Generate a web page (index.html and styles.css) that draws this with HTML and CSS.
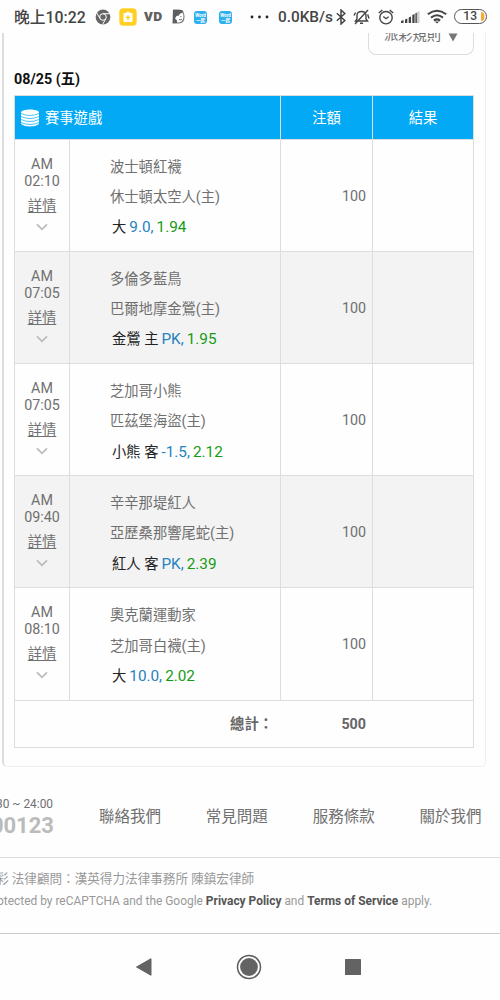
FILE: index.html
```
<!DOCTYPE html>
<html lang="zh-Hant">
<head>
<meta charset="utf-8">
<title>賽事遊戲</title>
<link rel="stylesheet" href="styles.css">
</head>
<body>
<header class="status">
  <div class="clock">晚上10:22</div>
  <svg class="i-chrome" viewBox="0 0 16 16"><circle cx="8" cy="8" r="7.4" fill="#666"/><g stroke="#fff" stroke-width="1" fill="none"><circle cx="8" cy="8" r="3.3"/><path d="M8 4.7h7M5.2 9.7 1.6 3.8M10.9 9.7 7.5 15.5"/></g></svg>
  <svg class="i-yellow" viewBox="0 0 18 18"><rect x=".3" y=".3" width="17.4" height="17.4" rx="4" fill="#ffcf23"/><path d="M5.500 5h2V3.700h3V5h2q1 0 1 1v7q0 1-1 1h-7q-1 0-1-1V6q0-1 1-1z" fill="#fff"/><path d="M9 7.200v4.600M6.700 9.500h4.600" stroke="#ffcf23" stroke-width="1.4"/></svg>
  <div class="vd">VD</div>
  <svg class="i-face" viewBox="0 0 13 15"><path d="M1.500 1h5.200c3.700 0 5.300 2.700 5.300 6.500s-2 6.500-5.300 6.500H1z" fill="#fff" stroke="#777" stroke-width="1.1"/><path d="M1 1h9.500v3L8 4.500 7 6.500 4.500 7 3 9.500 5 11.500 5 14H1z" fill="#5e5e5e"/><path d="M8.300 7.500h1M7 10.500q2 1 3-.5" fill="none" stroke="#666"/></svg>
  <div class="word">Word<br>一起</div>
  <div class="word second">Word<br>一起</div>
  <svg class="i-dots" viewBox="0 0 20 4" fill="#222"><circle cx="2" cy="2" r="1.400"/><circle cx="9.500" cy="2" r="1.400"/><circle cx="17" cy="2" r="1.400"/></svg>
  <div class="speed">0.0KB/s</div>
  <svg class="i-bt" viewBox="0 0 10 16"><path d="m.8 4.300 8 7.200L5 15V1l3.800 3.500-8 7.200" fill="none" stroke="#444" stroke-width="1.500"/></svg>
  <svg class="i-bell" viewBox="0 0 17 16" fill="none" stroke="#444" stroke-width="1.400"><path d="M2.500 12h12L13 10V6.500C13 4 11.500 2.500 8.500 2.500S4 4 4 6.500V10zM7 14.300h3M15 1 2 15M1 6.500 2.600 3.500M16 9.500 14.700 5.500"/></svg>
  <svg class="i-alarm" viewBox="0 0 16 16" fill="none" stroke="#444" stroke-width="1.400"><circle cx="8" cy="8.700" r="6.200"/><path d="M.8 4 4.300 1M15.200 4l-3.500-3M5.300 7.500 8 9.700l2.700-2"/></svg>
  <svg class="i-signal" viewBox="0 0 19 14"><g fill="#444"><path d="M0 13v-2l2.500-1v3zM4 9.500l2.300-1V13H4zM7.700 7.500l2.300-1V13H7.700zM11.300 5l2.300-1v9h-2.300z"/></g><path d="M14.500 3 18.500 1v12h-4z" fill="#ccc"/><path d="M14.400 3h1.500v10h-1.500z" fill="#555"/></svg>
  <svg class="i-wifi" viewBox="0 0 20 15" fill="none" stroke="#444" stroke-width="2"><path d="M.8 5.200q9.200-7 18.400 0M4 8.600q6-4.600 12 0M6.900 11.600q3.100-2.400 6.200 0"/><path d="m7.800 12.400 2.200 2.200 2.200-2.200z" fill="#444" stroke="none"/></svg>
  <div class="battery"><span>13</span><svg viewBox="0 0 4 9"><path d="M0 0q3.500 0 3.500 4.500T0 9z" fill="#f8ab32"/></svg></div>
</header>

<main class="page">
  <section class="card">
    <div class="rules"><span>派彩規則</span><svg viewBox="0 0 10 9"><path d="M.5.500h9L5 8.500z" fill="#777"/></svg></div>
    <h1 class="date">08/25 (五)</h1>
    <div class="table">
      <div class="row head">
        <div class="title"><svg class="coins" viewBox="0 0 18 18"><path d="M0 3.500C0-.6 18-.6 18 3.500V14c0 4.500-18 4.500-18 0z" fill="#fff"/><path d="M0 4.500q9 4 18 0M0 7.500q9 4 18 0M0 10.500q9 4 18 0M0 13.500q9 4 18 0" fill="none" stroke="#03a9f4" stroke-width=".7"/></svg>賽事遊戲</div>
        <div>注額</div>
        <div>結果</div>
      </div>
      <div class="row">
        <div class="time"><span>AM</span><span>02:10</span><a>詳情</a><svg viewBox="0 0 12 8"><path d="m1 1.300 5 5 5-5"/></svg></div>
        <div class="match"><p>波士頓紅襪</p><p>休士頓太空人(主)</p><p class="pick">大<b>9.0,</b><i>1.94</i></p></div>
        <div class="stake">100</div><div></div>
      </div>
      <div class="row alt">
        <div class="time"><span>AM</span><span>07:05</span><a>詳情</a><svg viewBox="0 0 12 8"><path d="m1 1.300 5 5 5-5"/></svg></div>
        <div class="match"><p>多倫多藍鳥</p><p>巴爾地摩金鶯(主)</p><p class="pick">金鶯 主<b>PK,</b><i>1.95</i></p></div>
        <div class="stake">100</div><div></div>
      </div>
      <div class="row">
        <div class="time"><span>AM</span><span>07:05</span><a>詳情</a><svg viewBox="0 0 12 8"><path d="m1 1.300 5 5 5-5"/></svg></div>
        <div class="match"><p>芝加哥小熊</p><p>匹茲堡海盜(主)</p><p class="pick">小熊 客<b>-1.5,</b><i>2.12</i></p></div>
        <div class="stake">100</div><div></div>
      </div>
      <div class="row alt">
        <div class="time"><span>AM</span><span>09:40</span><a>詳情</a><svg viewBox="0 0 12 8"><path d="m1 1.300 5 5 5-5"/></svg></div>
        <div class="match"><p>辛辛那堤紅人</p><p>亞歷桑那響尾蛇(主)</p><p class="pick">紅人 客<b>PK,</b><i>2.39</i></p></div>
        <div class="stake">100</div><div></div>
      </div>
      <div class="row">
        <div class="time"><span>AM</span><span>08:10</span><a>詳情</a><svg viewBox="0 0 12 8"><path d="m1 1.300 5 5 5-5"/></svg></div>
        <div class="match"><p>奧克蘭運動家</p><p>芝加哥白襪(主)</p><p class="pick">大<b>10.0,</b><i>2.02</i></p></div>
        <div class="stake">100</div><div></div>
      </div>
      <div class="row total"><div class="label">總計：</div><div class="sum">500</div></div>
    </div>
  </section>

  <section class="links">
    <div class="phone"><span class="hours">30 ~ 24:00</span><span class="number">00123</span></div>
    <nav class="menu"><a>聯絡我們</a><a>常見問題</a><a>服務條款</a><a>關於我們</a></nav>
  </section>
  <footer class="legal">
    <p class="law">彩 法律顧問：漢英得力法律事務所 陳鎮宏律師</p>
    <p class="captcha">otected by reCAPTCHA and the Google <b>Privacy Policy</b> and <b>Terms of Service</b> apply.</p>
  </footer>
</main>

<nav class="keys">
  <svg class="k-back" viewBox="0 0 16 18"><path d="M.5 9 15 .7v16.600z" fill="#636363" stroke="#636363" stroke-linejoin="round"/></svg>
  <svg class="k-home" viewBox="0 0 26 26"><circle cx="13" cy="13" r="11.500" fill="none" stroke="#5c5c5c" stroke-width="1.500"/><circle cx="13" cy="13" r="8.900" fill="#636363"/></svg>
  <svg class="k-recent" viewBox="0 0 16 16"><rect width="16" height="16" rx=".6" fill="#636363"/></svg>
</nav>
</body>
</html>
```
FILE: styles.css
```
* { box-sizing: border-box; }
body { margin: 0; width: 500px; height: 1000px; overflow: hidden; background: #fefefe; color: #707070; font: 14.3px/17px Roboto, "Noto Sans CJK TC", sans-serif; }
p, h1 { margin: 0; }
svg { display: block; flex: none; }

.status { display: flex; align-items: center; height: 33px; padding-left: 14px; color: #444; white-space: nowrap; }
.status > * { flex: none; }
.clock { width: 73px; padding-top: 1px; font-size: 15.800px; font-weight: 500; }
.i-chrome { width: 16px; height: 16px; margin-left: 8px; }
.i-yellow { width: 18px; height: 18px; margin-left: 8px; }
.vd { width: 20px; margin-left: 7px; font-family: "Open Sans", sans-serif; font-weight: 800; font-size: 12.800px; color: #606060; }
.i-face { width: 13px; height: 15px; margin-left: 8px; }
.word { width: 13px; height: 13px; margin: 2px 0 0 9px; border-radius: 3px; background: #2fb0ee; color: #fff; font: bold 4.5px/5px Roboto, "Noto Sans CJK TC", sans-serif; padding-top: 2px; text-align: center; }
.word.second { margin-left: 12px; }
.i-dots { width: 20px; height: 4px; margin-left: 18px; }
.speed { width: 57px; margin-left: 8px; padding-top: 1px; font-size: 15.300px; font-weight: 500; }
.i-bt { width: 10px; height: 16px; margin-left: 1px; }
.i-bell { width: 17px; height: 16px; margin-left: 7px; }
.i-alarm { width: 16px; height: 16px; margin-left: 8px; }
.i-signal { width: 19px; height: 14px; margin-left: 7px; }
.i-wifi { width: 20px; height: 15px; margin-left: 7px; }
.battery { display: flex; align-items: center; justify-content: flex-end; gap: 4px; width: 33px; height: 15px; margin-left: 7px; padding-right: 1px; border: 1.5px solid #555; border-radius: 8px; font-size: 12px; font-weight: 500; }
.battery svg { width: 4px; height: 9px; }

.page { height: 900px; overflow: hidden; }
.card { width: 484px; height: 734px; margin-left: 2px; padding: 0 12px 0 10px; border: 1px solid #eee; border-top: 0; border-left: 2px solid #ddd; border-radius: 0 0 5px 5px; }
.rules { display: flex; justify-content: center; gap: 7px; width: 106px; height: 22px; margin-left: auto; margin-right: -1px; border: 1px solid #ddd; border-top: 0; border-radius: 0 0 8px 8px; overflow: hidden; }
.rules span { margin-top: -6px; height: 17px; }
.rules svg { width: 10px; height: 9px; }
.date { margin-top: 15px; color: #111; font-size: 14.300px; line-height: 18px; font-weight: 700; }
.table { width: 460px; margin-top: 7px; border: 1px solid #ddd; }
.row { display: grid; grid-template-columns: 54px 211px 92px 1fr; height: 112.200px; border-bottom: 1px solid #ddd; }
.row > div + div { border-left: 1px solid #ddd; }
.row.alt { background: #f3f3f3; }
.row.head { grid-template-columns: 265px 92px 1fr; height: 43.600px; background: #03a9f4; color: #fff; }
.row.head > div { display: flex; align-items: center; justify-content: center; padding-top: 2px; }
.row.head > .title { justify-content: flex-start; padding-left: 6px; gap: 6px; }
.coins { width: 18px; height: 18px; }
.time { display: flex; flex-direction: column; align-items: center; padding-top: 16px; }
.time a { margin-top: 8px; text-decoration: underline; }
.time svg { width: 12px; height: 8px; margin-top: 8px; fill: none; stroke: #bbb; stroke-width: 1.700; }
.match { padding: 12px 0 0 40px; line-height: 30.300px; white-space: nowrap; }
.pick { padding-left: 2px; color: #222; }
.pick b { margin-left: 3px; color: #2583c0; font-weight: 400; font-size: 15.300px; }
.pick i { margin-left: 3px; color: #169b16; font-style: normal; font-size: 15.300px; }
.stake { padding: 48px 6px 0 0; text-align: right; }
.row.total { grid-template-columns: 265px 92px; height: 46.400px; border: 0; font-weight: 700; line-height: 47px; text-align: right; color: #666; }
.row.total > .label { padding-right: 7px; }
.row.total > .sum { border: 0; padding-right: 6px; }

.links { display: flex; height: 91px; border-bottom: 1px solid #ddd; }
.phone { display: flex; flex-direction: column; align-items: flex-end; width: 54px; padding-top: 29px; white-space: nowrap; }
.hours { padding-right: 1px; font-size: 11.900px; line-height: 16px; }
.number { color: #bbb; font-size: 22px; line-height: 28px; font-weight: 700; }
.menu { display: flex; gap: 44.800px; margin-left: 45px; padding-top: 42px; font-size: 15.500px; white-space: nowrap; }
.menu a { flex: none; }
.legal { color: #999; white-space: nowrap; }
.law { margin: 12px 0 0 -4px; font-size: 12.600px; line-height: 18px; }
.captcha { margin: 4px 0 0 -3px; font-size: 11.930px; line-height: 18px; }
.captcha b { color: #555; }

.keys { display: flex; align-items: center; height: 67px; padding-left: 136px; border-top: 1px solid #ccc; }
.k-back { width: 16px; height: 18px; }
.k-home { width: 26px; height: 26px; margin-left: 84px; }
.k-recent { width: 16px; height: 16px; margin-left: 83px; }
```
